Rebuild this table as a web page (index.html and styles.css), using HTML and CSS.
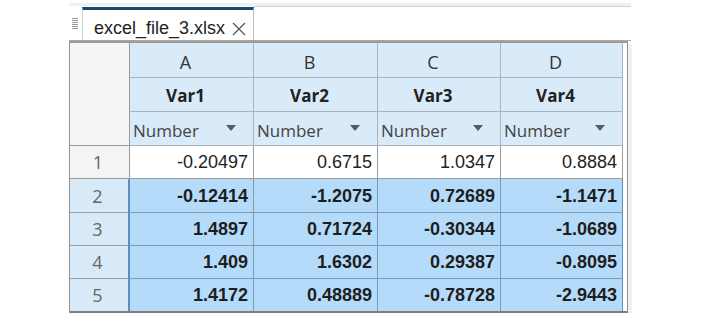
FILE: index.html
```html
<!DOCTYPE html>
<html>
<head>
<meta charset="utf-8">
<link rel="stylesheet" href="styles.css">
</head>
<body>
<div class="panel">
  <div class="tabbar">
    <div class="grip">
      <svg width="6" height="12" viewBox="0 0 6 12"><path d="M0 0.5H6M0 2.5H6M0 4.5H6M0 6.5H6M0 8.5H6M0 10.5H6" stroke="#9a9a9a" stroke-width="1"/></svg>
    </div>
    <div class="tab">
      <span class="tab-title">excel_file_3.xlsx</span>
      <svg class="close" width="14" height="14" viewBox="0 0 14 14"><path d="M1 1L13 13M13 1L1 13" stroke="#555" stroke-width="1.2"/></svg>
    </div>
    <div class="tabfill"></div>
  </div>
  <div class="gridwrap">
    <div class="grid">
      <div class="corner"></div>
      <div class="h col">A</div>
      <div class="h col">B</div>
      <div class="h col">C</div>
      <div class="h col">D</div>

      <div class="h var">Var1</div>
      <div class="h var">Var2</div>
      <div class="h var">Var3</div>
      <div class="h var">Var4</div>

      <div class="h type"><span>Number</span><i class="tri"></i></div>
      <div class="h type"><span>Number</span><i class="tri"></i></div>
      <div class="h type"><span>Number</span><i class="tri"></i></div>
      <div class="h type"><span>Number</span><i class="tri"></i></div>

      <div class="rh r1">1</div>
      <div class="c r1">-0.20497</div>
      <div class="c r1">0.6715</div>
      <div class="c r1">1.0347</div>
      <div class="c r1">0.8884</div>

      <div class="rh srh">2</div>
      <div class="c s">-0.12414</div>
      <div class="c s">-1.2075</div>
      <div class="c s">0.72689</div>
      <div class="c s sr">-1.1471</div>

      <div class="rh srh">3</div>
      <div class="c s">1.4897</div>
      <div class="c s">0.71724</div>
      <div class="c s">-0.30344</div>
      <div class="c s sr">-1.0689</div>

      <div class="rh srh">4</div>
      <div class="c s">1.409</div>
      <div class="c s">1.6302</div>
      <div class="c s">0.29387</div>
      <div class="c s sr">-0.8095</div>

      <div class="rh srh last">5</div>
      <div class="c s last">1.4172</div>
      <div class="c s last">0.48889</div>
      <div class="c s last">-0.78728</div>
      <div class="c s sr last">-2.9443</div>
    </div>
    <div class="gutter"></div>
  </div>
</div>
</body>
</html>
```

FILE: styles.css
```css
html, body {
  margin: 0;
  padding: 0;
  background: #ffffff;
}

.panel {
  margin: 3px 0 0 69px;
  width: 562px;
}

.tabbar {
  display: flex;
  height: 34px;
  border-top: 3px solid #f0f0f0;
  border-bottom: 1px solid #a8a8a8;
}

.grip {
  width: 13px;
  display: flex;
  align-items: flex-start;
  padding: 12px 0 0 3px;
  box-sizing: border-box;
}

.tab {
  width: 172px;
  box-sizing: border-box;
  margin-top: 1px;
  border-top: 3px solid #1b4a6d;
  border-left: 1px solid #cfcfcf;
  border-right: 1px solid #bdbdbd;
  background: #ffffff;
  display: flex;
  align-items: center;
  padding: 0 0 0 11px;
  gap: 7px;
}

.tab-title {
  font-family: "Liberation Sans", Arial, sans-serif;
  font-size: 18px;
  color: #222;
  line-height: 1;
  margin-top: 5px;
}

.close {
  margin-top: 7px;
}

.tabfill {
  flex: 1;
  border-top: 1px solid #d2d2d2;
}

.gridwrap {
  display: flex;
  width: 559px;
  box-sizing: border-box;
  border: 1px solid #929292;
  border-top: 2px solid #9a9a9a;
  border-bottom: 2px solid #7f7f7f;
  box-shadow: 4px 3px 0 #f1f1f1;
}

.grid {
  display: grid;
  grid-template-columns: 60px 124px 124px 123px 122px;
  grid-template-rows: 35px 34px 34px 33px 34px 33px 33px 32px;
}

.gutter {
  flex: 1;
  background: #ffffff;
}

.grid > div {
  box-sizing: border-box;
  border-right: 1px solid #9c9c9c;
  border-bottom: 1px solid #9c9c9c;
}

.corner {
  grid-row: 1 / span 3;
  background: #f4f4f4;
}

.h {
  background: #d9eaf9;
  font-family: "Open Sans", "Noto Sans", sans-serif;
  color: #333;
  display: flex;
  align-items: center;
  justify-content: center;
  border-color: #a9b4bf !important;
}

.col {
  font-size: 18px;
  padding: 3px 12px 0 0;
}

.var {
  font-size: 17px;
  font-weight: 700;
  color: #222;
  padding: 2px 12px 0 0;
}

.type {
  justify-content: space-between;
  font-size: 17px;
  color: #444;
  padding: 4px 17px 0 3px;
}

.tri {
  display: block;
  width: 0;
  height: 0;
  border-left: 5px solid transparent;
  border-right: 5px solid transparent;
  border-top: 6px solid #5a5a5a;
  margin-top: -5px;
}

.rh {
  font-family: "Open Sans", "Noto Sans", sans-serif;
  font-size: 18px;
  color: #666;
  display: flex;
  align-items: center;
  justify-content: center;
  padding-right: 3px;
}

.rh.r1 {
  background: #f4f4f4;
}

.grid > .srh {
  background: #d8e9f7;
  border-right: 2px solid #5b8fbf;
}

.c {
  font-family: "Liberation Sans", Arial, sans-serif;
  font-size: 18px;
  color: #222;
  display: flex;
  align-items: center;
  justify-content: flex-end;
  padding: 1px 5px 0 0;
}

.c.r1 {
  background: #ffffff;
}

.c.s {
  background: #b5dbfb;
  font-weight: 700;
  color: #1e1e1e;
  border-color: #7d9bb5;
}

.c.sr {
  border-right-color: #5b8fbf;
}

.grid > .last {
  border-bottom: none;
}
```
